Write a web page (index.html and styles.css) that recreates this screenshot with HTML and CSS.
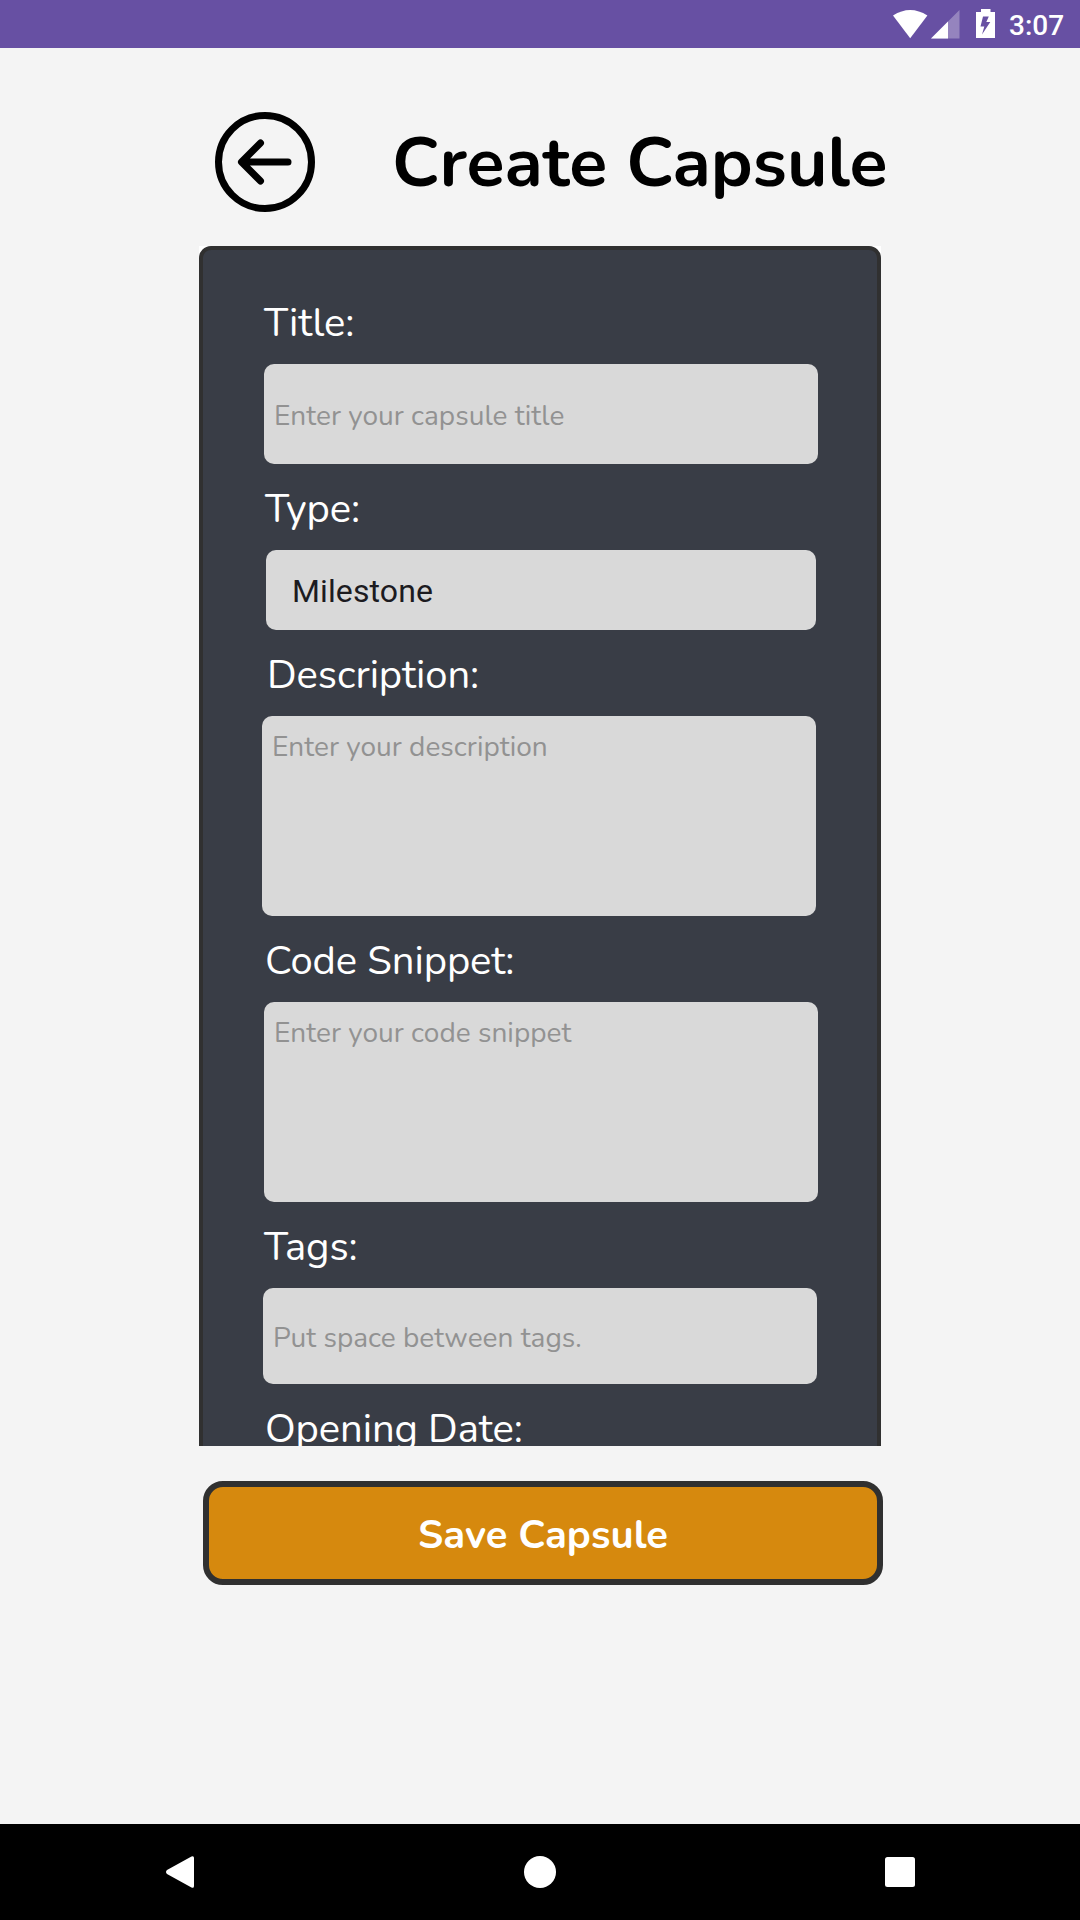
FILE: index.html
```html
<!DOCTYPE html>
<html lang="en">
<head>
<meta charset="utf-8">
<title>Create Capsule</title>
<link rel="stylesheet" href="styles.css">
</head>
<body>
<div class="status-bar">
  <svg class="status-icons" width="110" height="48" viewBox="0 0 110 48">
    <path fill="#fff" d="M0 15.500Q17.200 4.500 34.400 15.500L17.200 38.300Z"/>
    <path fill="#fff" fill-opacity=".3" d="M38 38.500L66.500 10V38.500Z"/>
    <path fill="#fff" d="M38 38.500L55 21.500V38.500Z"/>
    <path fill="#fff" fill-rule="evenodd" d="M83 12H88V9H97.500V12H102V38H83ZM90 16.500L87.500 26.500H91.300L89 34.500L97.300 22H93.300L95.800 16.500Z"/>
  </svg>
  <span class="clock">3:07</span>
</div>
<main class="screen">
  <header class="header">
    <svg class="back" width="100" height="100" viewBox="0 0 100 100" fill="none" stroke="#000" stroke-width="7" stroke-linecap="round" stroke-linejoin="round">
      <circle cx="50" cy="50" r="46.500"/>
      <path d="M73 50H27M45.500 31L26.500 50L45.500 69"/>
    </svg>
    <h1 class="title">Create Capsule</h1>
  </header>
  <div class="scroller">
    <div class="card">
      <div class="label inset-2">Title:</div>
      <div class="field field-title inset-2">Enter your capsule title</div>
      <div class="label inset-3">Type:</div>
      <div class="field spinner">Milestone</div>
      <div class="label inset-5">Description:</div>
      <div class="field area">Enter your description</div>
      <div class="label inset-3">Code Snippet:</div>
      <div class="field area inset-2">Enter your code snippet</div>
      <div class="label inset-2">Tags:</div>
      <div class="field field-tags inset-1">Put space between tags.</div>
      <div class="label inset-3">Opening Date:</div>
    </div>
  </div>
  <div class="save">Save Capsule</div>
</main>
<nav class="nav-bar">
  <svg width="32" height="32" viewBox="0 0 32 32"><path fill="#fff" d="M1 14L25.500 .4Q28 -.5 28 2V30Q28 32.500 25.500 31.600L1 18Q-1 16 1 14Z"/></svg>
  <svg width="32" height="32" viewBox="0 0 32 32"><circle cx="16" cy="16" r="16" fill="#fff"/></svg>
  <svg width="32" height="32" viewBox="0 0 32 32"><rect x="1" y="1" width="30" height="30" rx="2.500" fill="#fff"/></svg>
</nav>
</body>
</html>
```
FILE: styles.css
```css
* { box-sizing: border-box; }

body {
  margin: 0;
  width: 1080px;
  height: 1920px;
  display: flex;
  flex-direction: column;
  background: #f4f4f4;
  font-family: Nunito, "Open Sans", sans-serif;
  overflow: hidden;
}

.status-bar {
  height: 48px;
  display: flex;
  justify-content: flex-end;
  padding-right: 16px;
  background: #6750a3;
}

.status-icons { margin-right: 6px; }

.clock {
  width: 55px;
  color: #fff;
  font: 500 28px/51px Roboto, sans-serif;
}

.screen {
  flex: 1;
  display: flex;
  flex-direction: column;
  align-items: flex-start;
}

.header {
  display: flex;
  height: 198px;
  padding: 64px 0 0 215px;
}

.back { flex: none; }

.title {
  margin: 3px 0 0 77px;
  color: #000;
  font-size: 70px;
  font-weight: 700;
  line-height: 96px;
  white-space: nowrap;
}

.scroller {
  width: 682px;
  height: 1200px;
  margin-left: 199px;
  overflow: hidden;
  background: #fff;
}

.card {
  height: 1700px;
  padding: 46px 0 0 59px;
  border: 4px solid #303030;
  border-radius: 12px;
  background: #393d46;
}

.label {
  height: 54px;
  margin: 18px 0 14px;
  color: #fff;
  font-size: 40px;
  line-height: 54px;
  letter-spacing: -0.08px;
}

.label:first-child { margin-top: 0; }

.field {
  width: 554px;
  padding-left: 10px;
  border-radius: 10px;
  background: #d9d9d9;
  color: #929292;
  font-size: 28px;
  line-height: 38px;
  letter-spacing: 0.03px;
}

.field-title { height: 100px; padding-top: 33px; }
.field-tags { height: 96px; padding-top: 31px; }
.area { height: 200px; padding-top: 12px; }

.spinner {
  width: 550px;
  height: 80px;
  margin-left: 4px;
  padding: 22px 0 0 26px;
  color: #1c1b1f;
  font-family: Roboto, sans-serif;
  font-size: 32px;
  letter-spacing: 0.12px;
}

.inset-1 { margin-left: 1px; }
.inset-2 { margin-left: 2px; }
.inset-3 { margin-left: 3px; }
.inset-5 { margin-left: 5px; }

.save {
  width: 680px;
  height: 104px;
  margin: 35px 0 0 203px;
  padding-top: 21px;
  border: 6px solid #303030;
  border-radius: 20px;
  background: #d6890e;
  color: #fff;
  font-size: 40px;
  font-weight: 700;
  line-height: 54px;
  letter-spacing: 0.05px;
  text-align: center;
}

.nav-bar {
  height: 96px;
  display: flex;
  align-items: center;
  justify-content: space-between;
  padding: 0 164px 0 166px;
  background: #000;
}

.nav-bar svg:nth-child(2) { margin-right: 2px; }
```
